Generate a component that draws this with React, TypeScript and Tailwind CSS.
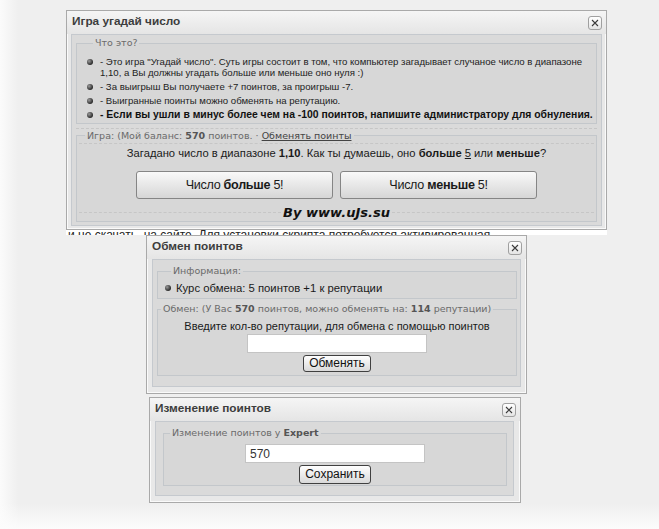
import type { ReactNode } from "react";

const tahoma = "font-['Liberation_Sans',Arial,sans-serif]";
const verdana = "font-['DejaVu_Sans',Verdana,sans-serif]";

function CloseButton() {
  return (
    <span className="flex h-[14px] w-[14px] items-center justify-center rounded-[3px] border border-[#a0a0a0] bg-gradient-to-b from-white to-[#e4e4e4]">
      <svg viewBox="0 0 10 10" className="h-[10px] w-[10px]" aria-hidden="true">
        <path d="M2 2l6 6M8 2l-6 6" stroke="#3a3a3a" strokeWidth="1.1" fill="none" />
      </svg>
    </span>
  );
}

function Bullet() {
  return (
    <span className="mt-[3px] h-[6px] w-[6px] shrink-0 rounded-full bg-[radial-gradient(circle_at_35%_35%,#9a9a9a,#2a2a2a_70%)]" />
  );
}

type DialogProps = {
  title: string;
  className: string;
  panelClass: string;
  children: ReactNode;
};

function Dialog({ title, className, panelClass, children }: DialogProps) {
  return (
    <div
      className={`flex flex-col border border-[#a9a9a9] bg-[#e8e8e8] shadow-[inset_0_0_0_1px_#fafafa] ${className}`}
    >
      <div className="flex h-[23px] shrink-0 items-center justify-between bg-gradient-to-b from-[#f5f5f5] to-[#e5e5e5] pl-[5px] pr-[4px]">
        <span className={`${tahoma} -mt-[2px] text-[11.8px] font-bold text-[#3d3d3d]`}>{title}</span>
        <CloseButton />
      </div>
      <div className={`flex-1 border border-[#c5c9ce] bg-[#dadada] ${panelClass}`}>{children}</div>
    </div>
  );
}

function SmallButton({ label, tall }: { label: string; tall?: boolean }) {
  return (
    <button
      className={`${tahoma} rounded-[3px] border border-[#404040] bg-gradient-to-b from-white to-[#d9d9d9] px-[5px] text-[12px] text-[#111] ${
        tall ? "leading-[17px]" : "leading-[15px]"
      }`}
    >
      {label}
    </button>
  );
}

function BigButton({ word }: { word: string }) {
  return (
    <button
      className={`${tahoma} h-[28px] w-[197px] rounded-[3px] border border-[#858585] bg-gradient-to-b from-[#f9f9f9] to-[#d6d6d6] text-[12.6px] tracking-[-0.3px] text-[#1a1a1a]`}
    >
      Число <b>{word}</b> 5!
    </button>
  );
}

export default function App() {
  return (
    <div className="min-h-[529px] w-[659px] bg-[#efefef] bg-[linear-gradient(to_top,#fcfcfc,rgba(239,239,239,0)_26px),linear-gradient(to_right,#fbfbfb,#efefef_18px)] pt-[10px]">
      {/* Guess-the-number game */}
      <Dialog
        title="Игра угадай число"
        className="ml-[66px] h-[220px] w-[541px]"
        panelClass="mx-[4px] mb-[3px] px-[4px] pb-[3px] pt-[3px]"
      >
        <fieldset className="min-w-0 border border-[#c3c7cb] bg-[#d7d7d7] pb-[3px] pl-[10px] pr-[2px]">
          <legend className={`${verdana} ml-[6px] px-[2px] text-[9.5px] leading-[10px] text-[#6a6a6a]`}>
            Что это?
          </legend>
          <ul
            className={`${tahoma} mt-[8px] flex flex-col gap-[3px] whitespace-nowrap text-[9.6px] leading-[11px] text-[#222]`}
          >
            <li className="flex gap-[7px]">
              <Bullet />
              <span>
                - Это игра "Угадай число". Суть игры состоит в том, что компьютер загадывает случаное
                число в диапазоне
                <br />
                1,10, а Вы должны угадать больше или меньше оно нуля :)
              </span>
            </li>
            <li className="flex gap-[7px]">
              <Bullet />
              <span>- За выигрыш Вы получаете +7 поинтов, за проигрыш -7.</span>
            </li>
            <li className="flex gap-[7px]">
              <Bullet />
              <span>- Выигранные поинты можно обменять на репутацию.</span>
            </li>
            <li className="flex gap-[7px]">
              <Bullet />
              <span className="text-[10.4px] font-bold text-[#111]">
                - Если вы ушли в минус более чем на -100 поинтов, напишите администратору для обнуления.
              </span>
            </li>
          </ul>
        </fieldset>

        <div className="mt-[4px] border-t border-dashed border-[#c6c6c6]" />

        <fieldset className="mt-[1px] min-w-0 border border-[#c3c7cb] bg-[#d7d7d7] px-[2px] pb-[1px]">
          <legend className={`${verdana} ml-[6px] px-[2px] text-[9.5px] leading-[11px] text-[#6a6a6a]`}>
            Игра: (Мой баланс: <b className="text-[#555]">570</b> поинтов. ·{" "}
            <span className="text-[#444] underline">Обменять поинты</span>
          </legend>
          <div className="mt-[2px] border-t border-dashed border-[#c6c6c6]" />
          <p className={`${tahoma} mt-[3px] text-center text-[11.2px] leading-[12px] text-[#1a1a1a]`}>
            Загадано число в диапазоне <b>1,10</b>. Как ты думаешь, оно <b>больше</b>{" "}
            <span className="underline">5</span> или <b>меньше</b>?
          </p>
          <div className="mt-[12px] flex justify-center gap-[7px]">
            <BigButton word="больше" />
            <BigButton word="меньше" />
          </div>
          <div className="mt-[6px] flex items-center">
            <div className="flex-1 border-t border-dashed border-[#c6c6c6]" />
            <span className={`${verdana} px-[2px] text-[13px] font-bold italic leading-[15px] text-[#111]`}>
              By www.uJs.su
            </span>
            <div className="flex-1 border-t border-dashed border-[#c6c6c6]" />
          </div>
        </fieldset>
      </Dialog>

      {/* page text peeking out between the windows */}
      <div className="ml-[66px] h-[5px] w-[541px] overflow-hidden bg-white">
        <p className={`${tahoma} -mt-[1px] whitespace-nowrap pl-[2px] text-[12px] leading-[12px] text-[#222] underline`}>
          и не скачать, на сайте. Для установки скрипта потребуется активированная
        </p>
      </div>

      {/* Points exchange */}
      <Dialog
        title="Обмен поинтов"
        className="ml-[146px] h-[159px] w-[381px]"
        panelClass="ml-[5px] mr-[5px] mb-[6px] pl-[4px] pr-[3px] pt-[6px]"
      >
        <fieldset className="min-w-0 border border-[#c3c7cb] bg-[#d7d7d7] pb-[4px] pl-[7px]">
          <legend className={`${verdana} ml-[6px] px-[2px] text-[9.5px] leading-[10px] text-[#6a6a6a]`}>
            Информация:
          </legend>
          <div className={`${tahoma} mt-[6px] flex items-start gap-[5px] text-[11.3px] leading-[12px] text-[#1a1a1a]`}>
            <Bullet />
            <span>Курс обмена: 5 поинтов +1 к репутации</span>
          </div>
        </fieldset>
        <fieldset className="mt-[5px] flex min-w-0 flex-col items-center border border-[#c3c7cb] bg-[#d7d7d7] pb-[3px]">
          <legend className={`${verdana} ml-[3px] px-[2px] text-[9.5px] leading-[10px] text-[#6a6a6a]`}>
            Обмен: (У Вас <b className="text-[#555]">570</b> поинтов, можно обменять на:{" "}
            <b className="text-[#555]">114</b> репутации)
          </legend>
          <p className={`${tahoma} mt-[6px] text-center text-[11px] leading-[12px] text-[#1a1a1a]`}>
            Введите кол-во репутации, для обмена с помощью поинтов
          </p>
          <input
            className="mx-auto mt-[2px] block h-[19px] w-[180px] border border-[#c4c4c4] bg-white"
            defaultValue=""
          />
          <div className="mt-[2px] flex justify-center">
            <SmallButton label="Обменять" />
          </div>
        </fieldset>
      </Dialog>

      {/* Points editor */}
      <Dialog
        title="Изменение поинтов"
        className="ml-[149px] mt-[3px] h-[106px] w-[372px]"
        panelClass="ml-[5px] mr-[6px] mb-[6px] pl-[7px] pr-[6px] pt-[6px]"
      >
        <fieldset className="min-w-0 border border-[#c3c7cb] bg-[#d7d7d7] pb-[1px]">
          <legend className={`${verdana} ml-[6px] px-[2px] text-[9.5px] leading-[10px] text-[#6a6a6a]`}>
            Изменение поинтов у <b className="text-[#555]">Expert</b>
          </legend>
          <input
            className={`${tahoma} mx-auto mt-[6px] block h-[19px] w-[180px] border border-[#c4c4c4] bg-white px-[4px] text-[12px] text-[#333]`}
            defaultValue="570"
          />
          <div className="mt-[2px] flex justify-center">
            <SmallButton label="Сохранить" tall />
          </div>
        </fieldset>
      </Dialog>
    </div>
  );
}
